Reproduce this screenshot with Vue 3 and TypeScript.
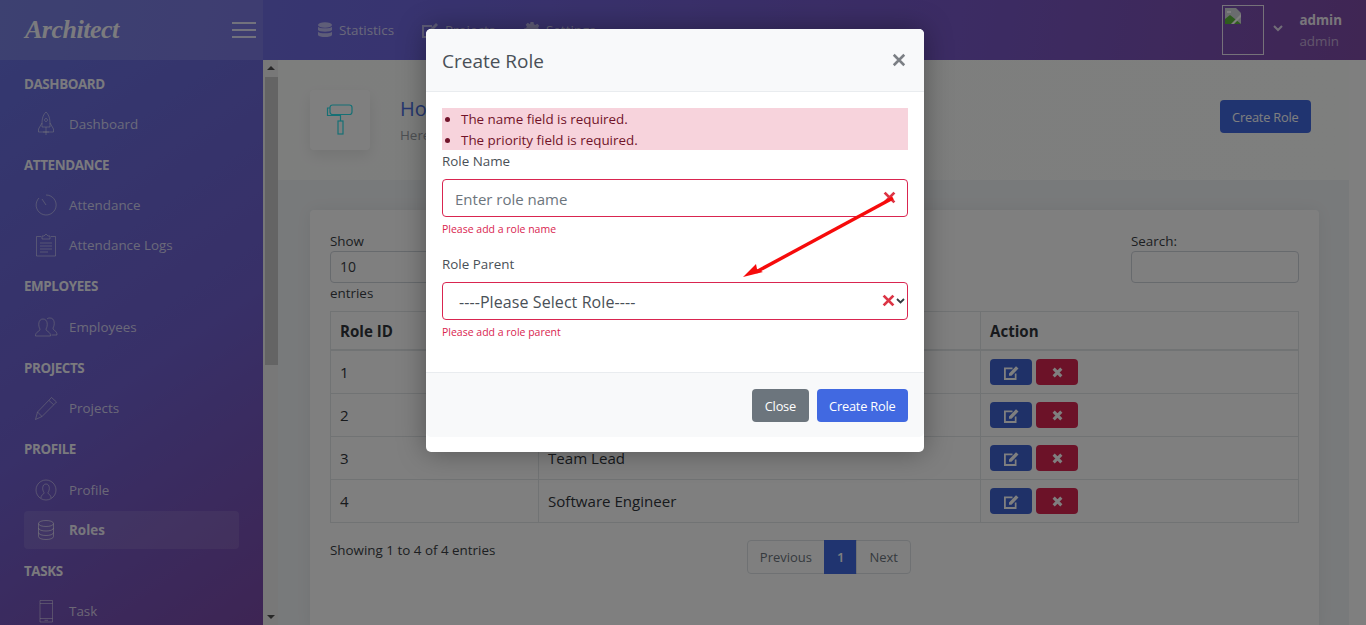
<script setup lang="ts">
interface NavItem { label: string; paths: string[]; active?: boolean }
interface NavGroup { title: string; items: NavItem[] }

const groups: NavGroup[] = [
  { title: 'Dashboard', items: [{ label: 'Dashboard', paths: ['M12 0C8 4 8 8 8 15H16C16 8 16 4 12 0Z', 'M8 11L4.5 17V20H19.5V17L16 11', 'M12 15V23', 'M9 20H15', 'M12 6.5a1.5 1.5 0 1 0 .01 0'] }] },
  { title: 'Attendance', items: [
    { label: 'Attendance', paths: ['M12 2a10 10 0 1 1-7 3', 'M12 12L8 6'] },
    { label: 'Attendance Logs', paths: ['M7 3.500H2.500V23H21.500V3.500H17', 'M8 6V3H10L12 1L14 3H16V6Z', 'M6 10H18M6 13H18M6 16H18M6 19H14'] }
  ] },
  { title: 'Employees', items: [{ label: 'Employees', paths: ['M1.500 21C1.500 16 6 17 6 14C4 11 4 4 9 4C14 4 14 11 12 14C12 17 16.500 16 16.500 21Z', 'M13 4C14 3 15 3 16 3C21 3 21 10 19 13C19 16 23 15 23 20H17.500'] }] },
  { title: 'Projects', items: [{ label: 'Projects', paths: ['M1.500 23.500L3.500 16L17.500 1.500L22.500 6L8 20.500Z', 'M3.500 16L8 20.500', 'M15 4.500L19.500 8.500'] }] },
  { title: 'Profile', items: [
    { label: 'Profile', paths: ['M12 2a10 10 0 1 0 .01 0', 'M7 20C7 16 10 17 10 14.500C8 12 8 6 12 6C16 6 16 12 14 14.500C14 17 17 16 17 20'] },
    { label: 'Roles', active: true, paths: ['M4.500 5.500C4.500 1.500 19.500 1.500 19.500 5.500C19.500 9.500 4.500 9.500 4.500 5.500V18.500C4.500 22.500 19.500 22.500 19.500 18.500V5.500', 'M4.500 10C4.500 14 19.500 14 19.500 10', 'M4.500 14.500C4.500 18.500 19.500 18.500 19.500 14.500'] }
  ] },
  { title: 'Tasks', items: [{ label: 'Task', paths: ['M6 1.500H18.500V23H6Z', 'M6 4.500H18.500M6 19.500H18.500M10.500 21.300H14'] }] }
]

interface Role { id: number; name: string }
const roles: Role[] = [
  { id: 1, name: 'Admin' },
  { id: 2, name: 'Project Manager' },
  { id: 3, name: 'Team Lead' },
  { id: 4, name: 'Software Engineer' }
]
</script>

<template>
  <div class="app">
    <header class="topbar">
      <div class="brand">
        <span class="logo">Architect</span>
        <span class="burger"><i></i><i></i><i></i></span>
      </div>
      <nav class="topnav">
        <a class="tn stat">
          <svg width="16" height="16" viewBox="0 0 16 16"><ellipse cx="8" cy="3" rx="7" ry="2.800" /><path d="M1 4.700c1.500 2 12.500 2 14 0V8c-1 2.300-13 2.300-14 0zM1 9.700c1.500 2 12.500 2 14 0V13c-1 2.800-13 2.800-14 0z" /></svg>
          Statistics
        </a>
        <a class="tn proj">
          <svg width="18" height="16" viewBox="0 0 18 16"><path d="M1 3h10v2H3v9h10V9h2v7H1zM7 9l8-8 2 2-8 8H7z" /></svg>
          Projects
        </a>
        <a class="tn sett">
          <svg width="16" height="16" viewBox="0 0 16 16"><path d="M6.500 0h3l.4 2.200 1.500.7 1.900-1.200 2 2-1.200 1.900.7 1.500L16 7v3l-2.200.4-.7 1.500 1.200 1.900-2 2-1.900-1.200-1.500.7L8.500 16h-2l-.4-2.200-1.500-.7-1.900 1.200-2-2 1.200-1.900L1.700 9 0 8.600V6.500l2.200-.4.7-1.500L1.700 2.700l2-2 1.900 1.200L6.100 2z" /></svg>
          Settings
        </a>
      </nav>
      <div class="user">
        <div class="avatar">
          <svg width="16" height="16" viewBox="0 0 16 16">
            <path d="M0 0h11l5 5v11H0z" fill="#d5d8dc" />
            <path d="M0 16V11l5-4 5 4 6 5z" fill="#5cb83a" />
            <path d="M2 3h4v2H2z" fill="#ffffff" />
            <path d="M16 6L6 16h3l7-7z" fill="#ffffff" />
          </svg>
        </div>
        <svg class="userchev" width="10" height="7" viewBox="0 0 10 7"><path d="M1 1l4 4 4-4" /></svg>
        <div class="usertext"><b>admin</b><span>admin</span></div>
      </div>
    </header>

    <div class="below">
      <aside class="sidebar">
        <template v-for="g in groups" :key="g.title">
          <div class="cat">{{ g.title }}</div>
          <a v-for="it in g.items" :key="it.label" class="item" :class="{ active: it.active }">
            <svg class="ic" width="24" height="24" viewBox="0 0 24 24"><path v-for="d in it.paths" :key="d" :d="d" /></svg>
            <span>{{ it.label }}</span>
          </a>
        </template>
      </aside>

      <div class="sbar">
        <span class="up"></span>
        <span class="thumb"></span>
        <span class="down"></span>
      </div>

      <main class="main">
        <section class="pagetitle">
          <div class="iconbox">
            <svg width="30" height="34" viewBox="0 0 30 34">
              <rect x="5" y="1" width="22" height="9.500" rx="2.500" />
              <path d="M5 4H2.500V11.500H15.500V17" />
              <rect x="13" y="17" width="5" height="13" />
            </svg>
          </div>
          <div class="heading">
            <h1>Home</h1>
            <p>Here</p>
          </div>
          <button class="btn primary titlebtn">Create Role</button>
        </section>

        <section class="card">
          <div class="controls">
            <div class="len">
              <label>Show</label>
              <div class="fake-select">10</div>
              <label>entries</label>
            </div>
            <div class="search">
              <label>Search:</label>
              <div class="fake-select"></div>
            </div>
          </div>

          <table class="tbl">
            <colgroup><col class="c1" /><col class="c2" /><col class="c3" /></colgroup>
            <thead><tr><th>Role ID</th><th></th><th>Action</th></tr></thead>
            <tbody>
              <tr v-for="r in roles" :key="r.id">
                <td>{{ r.id }}</td>
                <td>{{ r.name }}</td>
                <td class="acts">
                  <span class="act blue">
                    <svg width="16" height="15" viewBox="0 0 16 15"><path d="M1 2.500h8.500v1.700H2.800v8.900h9V8.500H13.500V15H1zM6 8.500L13 1.200l2.500 2.300-7 7.300H6z" /></svg>
                  </span>
                  <span class="act red">
                    <svg width="11" height="11" viewBox="0 0 10 10"><path d="M1.500 1.500l7 7M8.500 1.500l-7 7" /></svg>
                  </span>
                </td>
              </tr>
            </tbody>
          </table>

          <div class="tfoot">
            <span class="info">Showing 1 to 4 of 4 entries</span>
            <div class="pager">
              <span class="pg">Previous</span>
              <span class="pg cur">1</span>
              <span class="pg">Next</span>
            </div>
          </div>
        </section>
      </main>
    </div>

    <div class="backdrop"></div>

    <div class="modal">
      <div class="mhead">
        <h5>Create Role</h5>
        <svg width="14" height="14" viewBox="0 0 12 12"><path d="M1.500 1.500l9 9M10.500 1.500l-9 9" /></svg>
      </div>
      <div class="mbody">
        <ul class="alert">
          <li>The name field is required.</li>
          <li>The priority field is required.</li>
        </ul>
        <label class="flabel">Role Name</label>
        <div class="field">
          <input class="ctl" type="text" placeholder="Enter role name" />
          <svg class="bad" width="13" height="13" viewBox="0 0 12 12"><path d="M1.500 1.500l9 9M10.500 1.500l-9 9" /></svg>
        </div>
        <div class="help">Please add a role name</div>
        <label class="flabel second">Role Parent</label>
        <div class="field">
          <select class="ctl sel"><option>----Please Select Role----</option></select>
          <svg class="bad onsel" width="13" height="13" viewBox="0 0 12 12"><path d="M1.500 1.500l9 9M10.500 1.500l-9 9" /></svg>
          <svg class="chev" width="9" height="6" viewBox="0 0 9 6"><path d="M1 1l3.500 3.500L8 1" /></svg>
        </div>
        <div class="help">Please add a role parent</div>
      </div>
      <div class="mfoot">
        <button class="btn gray">Close</button>
        <button class="btn primary">Create Role</button>
      </div>
    </div>

    <svg class="arrow" width="170" height="100" viewBox="0 0 170 100">
      <path d="M152 12L15 86" />
      <polygon points="2,91 15,78 16,83 22,86" />
    </svg>
  </div>
</template>

<style>
html, body { margin: 0; height: 100%; overflow: hidden; }
</style>

<style scoped>
.app {
  position: relative;
  width: 1366px;
  height: 625px;
  overflow: hidden;
  display: flex;
  flex-direction: column;
  font-family: "Open Sans", "Noto Sans", sans-serif;
  font-size: 13.4px;
  color: #495057;
  background: #fff;
}
.topbar {
  height: 60px;
  flex: none;
  display: flex;
  align-items: center;
  background: linear-gradient(100deg, #6c74e0 0%, #7068e0 30%, #7858c8 70%, #804ca8 100%);
  color: #fff;
}
.brand {
  width: 263px;
  height: 60px;
  flex: none;
  box-sizing: border-box;
  padding: 0 7px 0 25px;
  display: flex;
  align-items: center;
  justify-content: space-between;
  background: rgba(255, 255, 255, 0.1);
}
.logo {
  font-family: "Liberation Serif", serif;
  font-style: italic;
  font-weight: 700;
  font-size: 26px;
  letter-spacing: -0.5px;
  color: rgba(255, 255, 255, 0.95);
}
.burger { display: flex; flex-direction: column; gap: 5.500px; width: 24px; }
.burger i { display: block; height: 1.500px; background: rgba(255, 255, 255, 0.8); }
.topnav { display: flex; height: 60px; align-items: center; padding-left: 54px; }
.tn { display: flex; align-items: center; gap: 6px; color: rgba(255, 255, 255, 0.7); }
.tn svg { fill: rgba(255, 255, 255, 0.55); }
.stat { width: 104px; }
.proj { width: 103px; }
.user { margin-left: auto; display: flex; align-items: center; padding-right: 24px; }
.avatar {
  width: 42px;
  height: 50px;
  box-sizing: border-box;
  border: 1px solid rgba(255, 255, 255, 0.85);
  padding: 2px;
  line-height: 0;
}
.userchev { margin: 0 16px 4px 9px; fill: none; stroke: rgba(255, 255, 255, 0.8); stroke-width: 2; }
.usertext { display: flex; flex-direction: column; gap: 4px; line-height: 17px; margin-top: 2px; }
.usertext b { font-weight: 700; color: #fff; opacity: 0.9; }
.usertext span { color: rgba(255, 255, 255, 0.55); }

.below { flex: 1; display: flex; min-height: 0; }
.sidebar {
  width: 263px;
  flex: none;
  box-sizing: border-box;
  padding: 3.600px 24px 0;
  overflow: hidden;
  background: linear-gradient(145deg, #6870e0 0%, #7060d0 55%, #7c4aa8 100%);
}
.cat {
  height: 41.400px;
  line-height: 41.400px;
  text-transform: uppercase;
  font-weight: 700;
  font-size: 13.400px;
  letter-spacing: -0.4px;
  color: rgba(255, 255, 255, 0.95);
}
.item {
  height: 38px;
  margin-bottom: 2px;
  box-sizing: border-box;
  display: flex;
  align-items: center;
  padding-left: 10px;
  border-radius: 4px;
  color: rgba(255, 255, 255, 0.72);
}
.item span { margin-left: 11px; }
.item.active { background: rgba(255, 255, 255, 0.1); color: rgba(255, 255, 255, 0.9); font-weight: 700; }
.ic { fill: none; stroke: rgba(255, 255, 255, 0.45); stroke-width: 1; flex: none; }
.item.active .ic { stroke: rgba(255, 255, 255, 0.55); }

.sbar {
  width: 15px;
  flex: none;
  box-sizing: border-box;
  display: flex;
  flex-direction: column;
  align-items: flex-end;
  background: #f1f1f1;
  padding-top: 6px;
}
.up, .down { width: 0; height: 0; margin-right: 3px; border-left: 4px solid transparent; border-right: 4px solid transparent; }
.up { border-bottom: 4px solid #505050; margin-bottom: 7px; }
.thumb { width: 13px; height: 288px; background: #c8c8c8; }
.down { border-top: 4px solid #505050; margin-top: auto; margin-bottom: 6px; }

.main { flex: 1; min-width: 0; background: #fff; overflow: hidden; }
.pagetitle {
  width: 1071px;
  height: 120px;
  box-sizing: border-box;
  padding: 30px 38px 0 32px;
  display: flex;
  align-items: flex-start;
  background: linear-gradient(90deg, #fbfcfb, #fcfefc);
}
.iconbox {
  width: 60px;
  height: 60px;
  flex: none;
  background: #fff;
  border-radius: 4px;
  box-shadow: 0 6px 14px rgba(0, 0, 0, 0.08);
  display: flex;
  align-items: center;
  justify-content: center;
}
.iconbox svg { fill: none; stroke: #2de0ea; stroke-width: 1.200; margin-top: 1px; }
.heading { margin-left: 30px; }
.heading h1 { margin: 6px 0 0; font-size: 20px; line-height: 26px; font-weight: 400; color: #4a6fe0; }
.heading p { margin: 4px 0 0; color: #9aa0a6; }
.titlebtn { margin-left: auto; margin-top: 10px; }

.card {
  width: 1071px;
  height: 445px;
  box-sizing: border-box;
  padding: 30px 30px 0 32px;
  background: #f1f4f6;
  position: relative;
}
.card::before {
  content: "";
  position: absolute;
  left: 32px;
  top: 30px;
  width: 1009px;
  height: 420px;
  background: #fff;
  border-radius: 4px;
  box-shadow: 0 0 16px rgba(0, 0, 0, 0.06);
}
.controls, .tbl, .tfoot { position: relative; }
.controls {
  display: flex;
  justify-content: space-between;
  padding: 21px 20px 0;
  height: 80px;
  box-sizing: border-box;
  line-height: 20px;
  color: #3a3f45;
}
.len { width: 100px; }
.len label, .search label { display: block; }
.fake-select {
  box-sizing: border-box;
  height: 32px;
  width: 168px;
  border: 1px solid #ced4da;
  border-radius: 4px;
  padding: 0 9px;
  line-height: 30px;
  font-size: 14px;
}
.len label:last-child { line-height: 21px; }
.tbl {
  margin: 21px 0 0 20px;
  width: 969px;
  table-layout: fixed;
  border-collapse: collapse;
  font-size: 15.100px;
  color: #30353a;
}
.tbl .c1 { width: 208px; }
.tbl .c2 { width: 442px; }
.tbl th, .tbl td { border: 1px solid #e3e6e8; padding: 0 9px; text-align: left; }
.tbl th { height: 37px; font-weight: 700; border-bottom-width: 2px; }
.tbl td { height: 42px; }
.acts { font-size: 0; }
.act {
  display: inline-flex;
  align-items: center;
  justify-content: center;
  width: 42px;
  height: 26px;
  border-radius: 4px;
  vertical-align: middle;
}
.act.blue { background: #3e62d0; }
.act.red { background: #d92550; margin-left: 4px; }
.act svg { fill: #fff; }
.act.red svg { fill: none; stroke: #fff; stroke-width: 2.800; }
.tfoot { margin-left: 20px; display: flex; width: 969px; }
.info { margin-top: 18px; color: #3a3f45; }
.pager { display: flex; margin: 17px 388px 0 auto; height: 34px; font-size: 13px; }
.pg {
  box-sizing: border-box;
  height: 34px;
  line-height: 32px;
  padding: 0 12px;
  border: 1px solid #dee2e6;
  margin-left: -1px;
  color: #6c757d;
}
.pg:first-child { border-radius: 4px 0 0 4px; }
.pg:last-child { border-radius: 0 4px 4px 0; }
.pg.cur { background: #4169e1; border-color: #4169e1; color: #fff; font-weight: 600; }

.btn {
  height: 33px;
  box-sizing: border-box;
  border: 0;
  border-radius: 4px;
  padding: 0 12.500px;
  font: inherit;
  font-size: 12.800px;
  font-weight: 500;
  letter-spacing: -0.2px;
  color: #fff;
}
.btn.primary { background: #4169e1; }
.btn.gray { background: #6c757d; }

.backdrop { position: absolute; inset: 0; background: rgba(0, 0, 0, 0.5); }

.modal {
  position: absolute;
  left: 426px;
  top: 29px;
  width: 498px;
  height: 423px;
  background: #fff;
  border-radius: 5px;
  box-shadow: 0 0 28px rgba(0, 0, 0, 0.35);
}
.mhead {
  height: 63px;
  box-sizing: border-box;
  padding: 0 18px 0 16px;
  display: flex;
  align-items: center;
  justify-content: space-between;
  background: #f8f9fa;
  border-bottom: 1px solid #e9ecef;
  border-radius: 5px 5px 0 0;
}
.mhead h5 { margin: 2px 0 0; font-size: 19px; font-weight: 400; color: #495057; }
.mhead svg { fill: none; stroke: #7b7f84; stroke-width: 2.200; }
.mbody { height: 281px; box-sizing: border-box; padding: 16px 16px 0; border-bottom: 1px solid #e9ecef; }
.alert {
  margin: 0;
  padding: 1px 0 0 19px;
  height: 41px;
  line-height: 21px;
  background: #f7d3dc;
  color: #71132a;
}
.flabel { display: block; line-height: 22px; color: #495057; }
.flabel.second { margin-top: 17px; }
.field { position: relative; margin-top: 7px; }
.ctl {
  display: block;
  width: 100%;
  height: 38px;
  box-sizing: border-box;
  border: 1px solid #d92550;
  border-radius: 4px;
  background: #fff;
  padding: 1px 12px 0;
  font: inherit;
  font-size: 15px;
  color: #495057;
  outline: none;
}
.ctl::placeholder { color: #6c757d; opacity: 1; }
.sel { appearance: none; padding: 2px 12px 0 16px; font-size: 16px; letter-spacing: 0.08px; }
.bad { position: absolute; right: 12px; top: 12px; fill: none; stroke: #dc3545; stroke-width: 2.600; }
.bad.onsel { right: 13px; }
.chev { position: absolute; right: 3px; top: 16px; fill: none; stroke: #343a40; stroke-width: 1.800; }
.help { margin-top: 5px; line-height: 14px; font-size: 10.500px; color: #d92550; }
.mfoot {
  height: 64px;
  box-sizing: border-box;
  padding: 16px;
  display: flex;
  justify-content: flex-end;
  gap: 8px;
  background: #f8f9fa;
  border-radius: 0 0 5px 5px;
}
.arrow { position: absolute; left: 741px; top: 186px; }
.arrow path { fill: none; stroke: #f60b0b; stroke-width: 3.400; }
.arrow polygon { fill: #f60b0b; }
</style>
